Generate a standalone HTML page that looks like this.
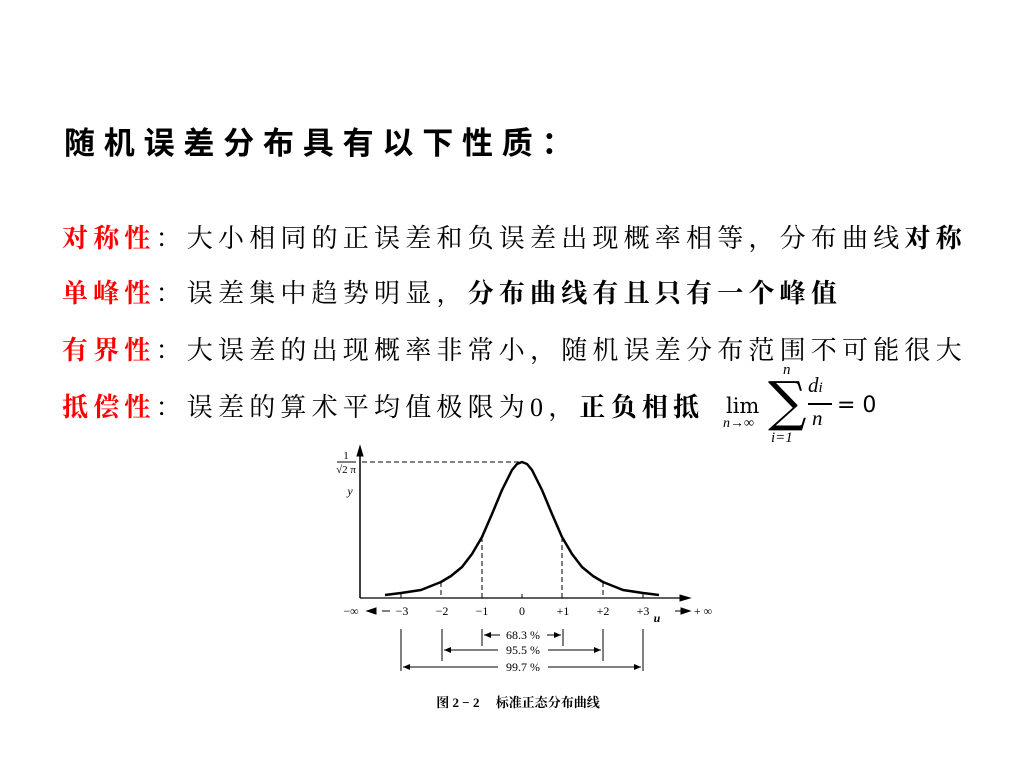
<!DOCTYPE html>
<html><head><meta charset="utf-8"><style>
body{margin:0;width:1024px;height:768px;background:#fff;position:relative;overflow:hidden;font-family:"Liberation Serif","Noto Serif CJK SC",serif;}
.t{position:absolute;white-space:nowrap;}
.title{left:64px;top:118px;font-size:31px;font-weight:bold;letter-spacing:8.8px;font-family:"Liberation Sans","Noto Sans CJK SC",sans-serif;}
.ln{left:62px;font-size:26px;letter-spacing:5.2px;}
.r{color:#f00;font-weight:bold;}
.b{font-weight:bold;}
.m{font-family:"Liberation Serif","DejaVu Serif",serif;font-style:italic;}
</style></head><body>
<div class="t title">随机误差分布具有以下性质：</div>
<div class="t ln" style="top:218px"><span class="r">对称性</span>：大小相同的正误差和负误差出现概率相等，分布曲线<span class="b">对称</span></div>
<div class="t ln" style="top:273px"><span class="r">单峰性</span>：误差集中趋势明显，<span class="b">分布曲线有且只有一个峰值</span></div>
<div class="t ln" style="top:330px"><span class="r">有界性</span>：大误差的出现概率非常小，随机误差分布范围不可能很大</div>
<div class="t ln" style="top:387px"><span class="r">抵偿性</span>：误差的算术平均值极限为0，<span class="b">正负相抵</span></div>
<div class="t" style="left:726px;top:394px;font-size:21px;font-family:'DejaVu Serif',serif;">lim</div>
<div class="t m" style="left:723px;top:416px;font-size:14px;">n→∞</div>
<div class="t" style="left:768px;top:372px;font-size:54px;font-family:'DejaVu Serif',serif;line-height:60px;">∑</div>
<div class="t m" style="left:783px;top:362px;font-size:15px;">n</div>
<div class="t m" style="left:771px;top:430px;font-size:15px;">i=1</div>
<div class="t m" style="left:808px;top:373px;font-size:21px;">d<span style="font-size:15px">i</span></div>
<div class="t" style="left:808px;top:403px;width:24px;height:1.5px;background:#000;"></div>
<div class="t m" style="left:812px;top:406px;font-size:21px;">n</div>
<div class="t" style="left:837px;top:393px;font-size:22px;font-family:'DejaVu Sans',sans-serif;">= 0</div>
<svg width="1024" height="768" style="position:absolute;left:0;top:0" font-family="Liberation Serif, serif">
<g stroke="#000" fill="none">
<line x1="360" y1="598" x2="360" y2="452" stroke-width="1.5"/>
<polygon points="360,446 357,456 363,456" fill="#000"/>
<line x1="360" y1="598" x2="684" y2="598" stroke-width="1.2"/>
<polygon points="690,598 680,595 680,601" fill="#000"/>
<line x1="362" y1="462" x2="520" y2="462" stroke-dasharray="5,3"/>
<polyline stroke-width="2.5" stroke-linejoin="round" points="385,595 401,593 421,590 441,582 451,576 462,567 472,554 482,537 492,514 502,490 512,470 517,464 522,462 527,464 532,470 542,490 552,514 562,537 572,554 582,567 593,576 603,582 623,590 643,593 659,595"/>
<g stroke-dasharray="5,3">
<line x1="441" y1="582" x2="441" y2="598"/><line x1="482" y1="537" x2="482" y2="598"/>
<line x1="562" y1="537" x2="562" y2="598"/><line x1="603" y1="582" x2="603" y2="598"/>
</g>
<line x1="522" y1="594" x2="522" y2="598"/><line x1="401" y1="593" x2="401" y2="598"/><line x1="643" y1="593" x2="643" y2="598"/>
<line x1="382" y1="611" x2="390" y2="611"/><polygon points="367,611 376,608 376,614" fill="#000"/>
<line x1="686" y1="611" x2="675" y2="611"/><polygon points="690,611 681,608 681,614" fill="#000"/>
<line x1="482" y1="629" x2="482" y2="646"/><line x1="563" y1="629" x2="563" y2="646"/>
<line x1="442" y1="629" x2="442" y2="661"/><line x1="603" y1="629" x2="603" y2="661"/>
<line x1="401" y1="629" x2="401" y2="671"/><line x1="643" y1="629" x2="643" y2="671"/>
<line x1="484" y1="635" x2="500" y2="635"/><line x1="547" y1="635" x2="561" y2="635"/>
<line x1="444" y1="650" x2="498" y2="650"/><line x1="548" y1="650" x2="601" y2="650"/>
<line x1="403" y1="667" x2="498" y2="667"/><line x1="548" y1="667" x2="641" y2="667"/>
</g>
<g fill="#000">
<polygon points="484,635 491,632 491,638"/><polygon points="561,635 554,632 554,638"/>
<polygon points="444,650 451,647 451,653"/><polygon points="601,650 594,647 594,653"/>
<polygon points="403,667 410,664 410,670"/><polygon points="641,667 634,664 634,670"/>
</g>
<g font-size="12" text-anchor="middle">
<text x="346" y="459" font-size="11">1</text>
<line x1="337" y1="462" x2="356" y2="462" stroke="#000"/>
<text x="346" y="473" font-size="11">√2 π</text>
<text x="350" y="495" font-style="italic">y</text>
<text x="351" y="615">−∞</text>
<text x="402" y="615">−3</text><text x="442" y="615">−2</text><text x="482" y="615">−1</text>
<text x="522" y="615">0</text><text x="563" y="615">+1</text><text x="603" y="615">+2</text><text x="643" y="615">+3</text>
<text x="657" y="622" font-style="italic" font-weight="bold">u</text>
<text x="703" y="615">+ ∞</text>
<text x="523" y="639">68.3 %</text><text x="523" y="654">95.5 %</text><text x="523" y="671">99.7 %</text>
<text x="518" y="707" font-size="13" font-family="Liberation Serif, Noto Serif CJK SC, serif" font-weight="bold">图 2 − 2　 标准正态分布曲线</text>
</g>
</svg>
</body></html>
